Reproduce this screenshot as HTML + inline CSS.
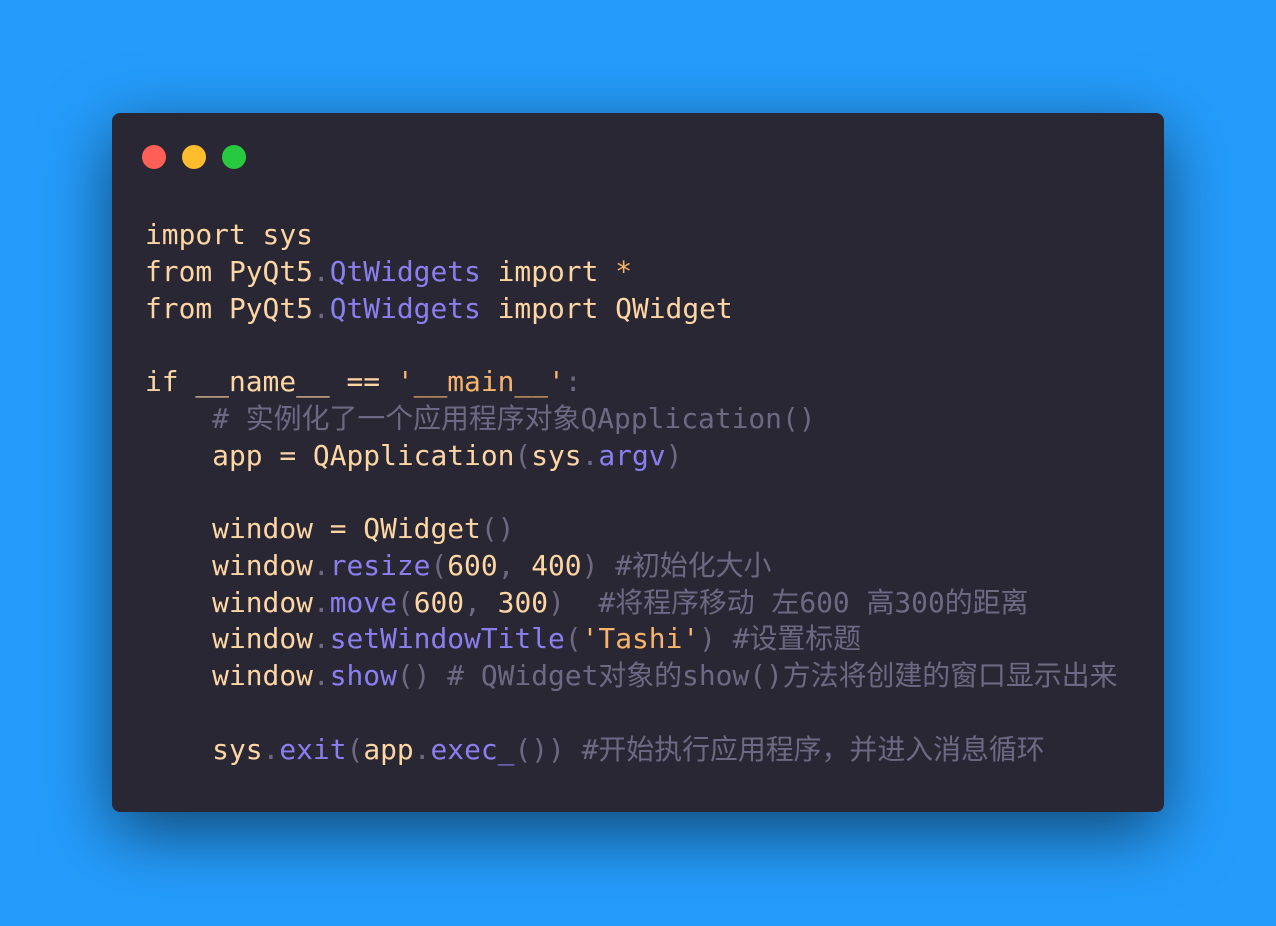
<!DOCTYPE html>
<html><head><meta charset="utf-8"><style>
html,body{margin:0;padding:0}
body{width:1276px;height:926px;background:#259cfb;position:relative;overflow:hidden}
.win{position:absolute;left:112px;top:113px;width:1052px;height:699px;background:#292734;border-radius:8px;box-shadow:0 20px 68px rgba(0,0,0,0.55)}
.dot{position:absolute;top:32px;width:24px;height:24px;border-radius:50%}
pre{position:absolute;left:33px;top:104px;margin:0;font-family:"DejaVu Sans Mono","Liberation Mono","Noto Sans CJK SC",monospace;font-size:27.9px;line-height:36.75px;color:#fdd6a4}
.p{color:#8b7ff0}.g{color:#6d6983}.o{color:#f8b46a}
</style></head><body>
<div class="win">
<div class="dot" style="left:30px;background:#ff5f56"></div>
<div class="dot" style="left:70px;background:#ffbd2e"></div>
<div class="dot" style="left:110px;background:#27c93f"></div>
<pre>import sys
from PyQt5<span class="g">.</span><span class="p">QtWidgets</span> import <span class="o">*</span>
from PyQt5<span class="g">.</span><span class="p">QtWidgets</span> import QWidget

if __name__ == <span class="o">'__main__'</span><span class="g">:</span>
    <span class="g"># 实例化了一个应用程序对象QApplication()</span>
    app = QApplication<span class="g">(</span>sys<span class="g">.</span><span class="p">argv</span><span class="g">)</span>

    window = QWidget<span class="g">()</span>
    window<span class="g">.</span><span class="p">resize</span><span class="g">(</span>600<span class="g">,</span> 400<span class="g">) #初始化大小</span>
    window<span class="g">.</span><span class="p">move</span><span class="g">(</span>600<span class="g">,</span> 300<span class="g">)  #将程序移动 左600 高300的距离</span>
    window<span class="g">.</span><span class="p">setWindowTitle</span><span class="g">(</span><span class="o">'Tashi'</span><span class="g">) #设置标题</span>
    window<span class="g">.</span><span class="p">show</span><span class="g">() # QWidget对象的show()方法将创建的窗口显示出来</span>

    sys<span class="g">.</span><span class="p">exit</span><span class="g">(</span>app<span class="g">.</span><span class="p">exec_</span><span class="g">()) #开始执行应用程序，并进入消息循环</span></pre>
</div>
</body></html>
